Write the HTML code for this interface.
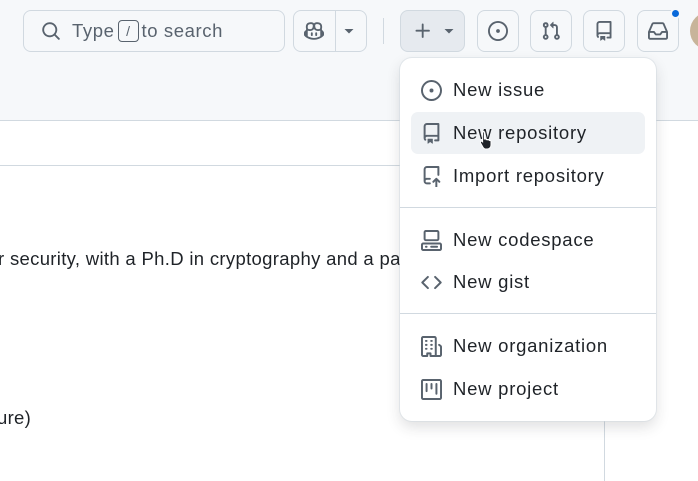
<!DOCTYPE html>
<html><head><style>
*{box-sizing:border-box;margin:0;padding:0}
body{width:698px;height:481px;overflow:hidden;background:#fff;font-family:"Liberation Sans",sans-serif;color:#1f2328;position:relative}
.hdr{position:absolute;left:0;top:0;width:698px;height:121px;background:#f6f8fa;border-bottom:1px solid #d1d9e0}
.btn{position:absolute;top:10px;height:42px;border:1px solid #d1d9e0;border-radius:8px;background:#f6f8fa;display:flex;align-items:center;justify-content:center}
.abs{position:absolute}
.menu{position:absolute;left:400px;top:58px;width:256px;height:363px;background:#fff;border-radius:12px;box-shadow:0 0 0 1px #d1d9e080,0 6px 14px rgba(37,41,46,.15)}
.it{position:absolute;left:11px;width:234px;height:42px;border-radius:7px;display:flex;align-items:center;font-size:18.5px;letter-spacing:.75px;color:#1f2328}
.it svg{position:absolute;left:10px}
.it span{position:absolute;left:42px}
.sep{position:absolute;left:0;width:256px;height:1px;background:#d1d9e0}
</style></head><body>
<div class="hdr"></div>
<div class="abs" style="left:0;top:165px;width:400px;height:1px;background:#d1d9e0"></div>
<div class="abs" style="left:604px;top:420px;width:1px;height:61px;background:#d1d9e0"></div>
<div class="abs" style="left:-2px;top:248px;font-size:18.5px;letter-spacing:.32px;white-space:nowrap">r security, with a Ph.D in cryptography and a pa</div>
<div class="abs" style="left:-3px;top:407px;font-size:18.5px;letter-spacing:.3px">ure)</div>

<div class="btn" style="left:23px;width:262px;justify-content:flex-start;color:#59636e;font-size:18.5px;letter-spacing:.6px">
<svg style="margin-left:17px" width="20" height="20" viewBox="0 0 16 16" fill="#59636e"><path d="M10.68 11.74a6 6 0 1 1 1.06-1.06l3.04 3.04a.75.75 0 1 1-1.06 1.06ZM11.5 7a4.5 4.5 0 1 0-9 0 4.5 4.5 0 0 0 9 0Z"/></svg>
<span style="margin-left:11px">Type</span><span style="display:inline-block;margin:0 3px;width:21px;height:22px;border:1px solid #59636e;border-radius:4px;font-size:14px;text-align:center;line-height:20px;letter-spacing:0">/</span><span>to search</span></div>

<div class="btn" style="left:293px;width:74px;justify-content:flex-start">
<svg style="margin-left:10px" width="20" height="20" viewBox="0 0 16 16" fill="#59636e"><path d="M7.998 15.035c-4.562 0-7.873-2.914-7.998-3.749V9.338c.085-.628.677-1.686 1.588-2.065.013-.07.024-.143.036-.218.029-.183.06-.384.126-.612-.201-.508-.254-1.084-.254-1.656 0-.87.128-1.769.693-2.484.579-.733 1.494-1.124 2.724-1.261 1.206-.134 2.262.034 2.944.765.05.053.096.108.139.165.044-.057.094-.112.143-.165.682-.731 1.738-.899 2.944-.765 1.23.137 2.145.528 2.724 1.261.566.715.693 1.614.693 2.484 0 .572-.053 1.148-.254 1.656.066.228.098.429.126.612.012.076.024.148.037.218.924.385 1.522 1.471 1.591 2.095v1.872c0 .766-3.351 3.795-8.002 3.795Zm0-1.485c2.28 0 4.584-1.11 5.002-1.433V7.862l-.023-.116c-.49.21-1.075.291-1.727.291-1.146 0-2.059-.327-2.710-.991A3.222 3.222 0 0 1 8 6.303a3.240 3.240 0 0 1-.544.743c-.65.664-1.563.991-2.710.991-.652 0-1.236-.081-1.727-.291l-.023.116v4.255c.419.323 2.722 1.433 5.002 1.433ZM6.762 2.830c-.193-.206-.637-.413-1.682-.297-1.019.113-1.479.404-1.713.7-.247.312-.369.789-.369 1.554 0 .793.129 1.171.308 1.371.162.181.519.379 1.442.379.853 0 1.339-.235 1.638-.54.315-.322.527-.827.617-1.553.117-.935-.037-1.395-.241-1.614Zm4.155-.297c-1.044-.116-1.488.091-1.681.297-.204.219-.359.679-.242 1.614.091.726.303 1.231.618 1.553.299.305.784.54 1.638.54.922 0 1.28-.198 1.442-.379.179-.2.308-.578.308-1.371 0-.765-.123-1.242-.37-1.554-.233-.296-.693-.587-1.713-.7Z"/><path d="M6.25 9.037a.75.75 0 0 1 .75.75v1.501a.75.75 0 0 1-1.5 0V9.787a.75.75 0 0 1 .75-.75Zm4.25.75v1.501a.75.75 0 0 1-1.5 0V9.787a.75.75 0 0 1 1.5 0Z"/></svg>
<div class="abs" style="left:41px;top:0;width:1px;height:40px;background:#d1d9e0"></div>
<svg class="abs" style="left:49px;top:15px" width="12" height="10" viewBox="0 0 12 10"><path d="M1.5 3h9L6 7.5z" fill="#59636e"/></svg>
</div>
<div class="abs" style="left:383px;top:18px;width:1px;height:26px;background:#d1d9e0"></div>

<div class="btn" style="left:400px;width:65px;background:#e6eaef">
<svg class="abs" style="left:12px;top:10px" width="20" height="20" viewBox="0 0 16 16" fill="#59636e"><path d="M7.75 2a.75.75 0 0 1 .75.75V7h4.25a.75.75 0 0 1 0 1.5H8.5v4.25a.75.75 0 0 1-1.5 0V8.5H2.750a.75.75 0 0 1 0-1.5H7V2.750A.75.75 0 0 1 7.75 2Z"/></svg>
<svg class="abs" style="left:42px;top:15px" width="12" height="10" viewBox="0 0 12 10"><path d="M1.5 3h9L6 7.5z" fill="#59636e"/></svg>
</div>
<div class="btn" style="left:477px;width:42px"><svg width="20" height="20" viewBox="0 0 16 16" fill="#59636e"><path d="M8 9.5a1.5 1.5 0 1 0 0-3 1.5 1.5 0 0 0 0 3Z"/><path d="M8 0a8 8 0 1 1 0 16A8 8 0 0 1 8 0ZM1.5 8a6.5 6.5 0 1 0 13 0 6.5 6.5 0 0 0-13 0Z"/></svg></div>
<div class="btn" style="left:530px;width:42px"><svg width="20" height="20" viewBox="0 0 16 16" fill="#59636e"><path d="M1.5 3.25a2.25 2.25 0 1 1 3 2.122v5.256a2.251 2.251 0 1 1-1.5 0V5.372A2.25 2.25 0 0 1 1.5 3.25Zm5.677-.177L9.573.677A.25.25 0 0 1 10 .854V2.5h1A2.5 2.5 0 0 1 13.5 5v5.628a2.251 2.251 0 1 1-1.5 0V5a1 1 0 0 0-1-1h-1v1.646a.25.25 0 0 1-.427.177L7.177 3.427a.25.25 0 0 1 0-.354ZM3.75 2.5a.75.75 0 1 0 0 1.5.75.75 0 0 0 0-1.5Zm0 9.5a.75.75 0 1 0 0 1.5.75.75 0 0 0 0-1.5Zm8.25.75a.75.75 0 1 0 1.5 0 .75.75 0 0 0-1.5 0Z"/></svg></div>
<div class="btn" style="left:583px;width:42px"><svg width="20" height="20" viewBox="0 0 16 16" fill="#59636e"><path d="M2 2.5A2.5 2.5 0 0 1 4.5 0h8.75a.75.75 0 0 1 .75.75v12.5a.75.75 0 0 1-.75.75h-2.5a.75.75 0 0 1 0-1.5h1.75v-2h-8a1 1 0 0 0-.714 1.7.75.75 0 1 1-1.072 1.05A2.495 2.495 0 0 1 2 11.5Zm10.5-1h-8a1 1 0 0 0-1 1v6.708A2.486 2.486 0 0 1 4.5 9h8ZM5 12.25a.25.25 0 0 1 .25-.25h3.5a.25.25 0 0 1 .25.25v3.25a.25.25 0 0 1-.4.2l-1.45-1.087a.249.249 0 0 0-.3 0L5.4 15.7a.25.25 0 0 1-.4-.2Z"/></svg></div>
<div class="btn" style="left:637px;width:42px"><svg width="20" height="20" viewBox="0 0 16 16" fill="#59636e"><path d="M2.8 2.06A1.75 1.75 0 0 1 4.41 1h7.18c.7 0 1.333.417 1.61 1.06l2.74 6.395c.04.093.06.194.06.295v4.5A1.75 1.75 0 0 1 14.25 15H1.75A1.75 1.75 0 0 1 0 13.25v-4.5c0-.101.02-.202.06-.295Zm1.61.44a.25.25 0 0 0-.23.152L1.887 8H4.75a.75.75 0 0 1 .6.3L6.625 10h2.75l1.275-1.7a.75.75 0 0 1 .6-.3h2.863L11.820 2.652a.25.25 0 0 0-.23-.152Zm10.09 7h-2.875l-1.275 1.7a.75.75 0 0 1-.6.3h-3.5a.75.75 0 0 1-.6-.3L4.375 9.5H1.5v3.75c0 .138.112.25.25.25h12.5a.25.25 0 0 0 .25-.25Z"/></svg></div>
<div class="abs" style="left:670px;top:8px;width:11px;height:11px;border-radius:50%;background:#0969da;border:2px solid #f6f8fa"></div>
<div class="abs" style="left:690px;top:12px;width:38px;height:38px;border-radius:50%;background:#c8b49a"></div>

<div class="menu">
<div class="it" style="top:11px"><svg width="21" height="21" viewBox="0 0 16 16" fill="#59636e"><path d="M8 9.5a1.5 1.5 0 1 0 0-3 1.5 1.5 0 0 0 0 3Z"/><path d="M8 0a8 8 0 1 1 0 16A8 8 0 0 1 8 0ZM1.5 8a6.5 6.5 0 1 0 13 0 6.5 6.5 0 0 0-13 0Z"/></svg><span>New issue</span></div>
<div class="it" style="top:54px;background:#eff2f5"><svg width="21" height="21" viewBox="0 0 16 16" fill="#59636e"><path d="M2 2.5A2.5 2.5 0 0 1 4.5 0h8.75a.75.75 0 0 1 .75.75v12.5a.75.75 0 0 1-.75.75h-2.5a.75.75 0 0 1 0-1.5h1.75v-2h-8a1 1 0 0 0-.714 1.7.75.75 0 1 1-1.072 1.05A2.495 2.495 0 0 1 2 11.5Zm10.5-1h-8a1 1 0 0 0-1 1v6.708A2.486 2.486 0 0 1 4.5 9h8ZM5 12.25a.25.25 0 0 1 .25-.25h3.5a.25.25 0 0 1 .25.25v3.25a.25.25 0 0 1-.4.2l-1.45-1.087a.249.249 0 0 0-.3 0L5.4 15.7a.25.25 0 0 1-.4-.2Z"/></svg><span>New repository</span></div>
<div class="it" style="top:97px"><svg width="21" height="21" viewBox="0 0 16 16" fill="#59636e"><path d="M2 2.5A2.5 2.5 0 0 1 4.5 0h8.75a.75.75 0 0 1 .75.75v6a.75.75 0 0 1-1.5 0V1.5h-8a1 1 0 0 0-1 1v6.708A2.493 2.493 0 0 1 4.5 9h2.25a.75.75 0 0 1 0 1.5H4.5a1 1 0 0 0 0 2h2.25a.75.75 0 0 1 0 1.5H4.5A2.5 2.5 0 0 1 2 11.5Zm10.22 6.72 2.25 2.25a.75.75 0 1 1-1.06 1.06l-.97-.97v4.69a.75.75 0 0 1-1.5 0v-4.69l-.97.97a.75.75 0 1 1-1.06-1.06l2.25-2.25a.75.75 0 0 1 1.06 0Z"/></svg><span>Import repository</span></div>
<div class="sep" style="top:149px"></div>
<div class="it" style="top:161px"><svg width="21" height="21" viewBox="0 0 16 16" fill="#59636e"><path d="M0 11.25c0-.966.784-1.75 1.75-1.75h12.5c.966 0 1.75.784 1.75 1.75v3A1.75 1.75 0 0 1 14.25 16H1.75A1.75 1.75 0 0 1 0 14.25Zm2-9.5C2 .784 2.784 0 3.75 0h8.5C13.216 0 14 .784 14 1.75v5a1.75 1.75 0 0 1-1.75 1.75h-8.5A1.75 1.75 0 0 1 2 6.75Zm1.75-.25a.25.25 0 0 0-.25.25v5c0 .138.112.25.25.25h8.5a.25.25 0 0 0 .25-.25v-5a.25.25 0 0 0-.25-.25Zm-2 9.5a.25.25 0 0 0-.25.25v3c0 .138.112.25.25.25h12.5a.25.25 0 0 0 .25-.25v-3a.25.25 0 0 0-.25-.25Z"/><path d="M7 12.75a.75.75 0 0 1 .75-.75h4.5a.75.75 0 0 1 0 1.5h-4.5a.75.75 0 0 1-.75-.75Zm-4 0a.75.75 0 0 1 .75-.75h.5a.75.75 0 0 1 0 1.5h-.5a.75.75 0 0 1-.75-.75Z"/></svg><span>New codespace</span></div>
<div class="it" style="top:203px"><svg width="21" height="21" viewBox="0 0 16 16" fill="#59636e"><path d="m11.28 3.22 4.25 4.25a.75.75 0 0 1 0 1.06l-4.25 4.25a.749.749 0 0 1-1.275-.326.749.749 0 0 1 .215-.734L13.94 8l-3.72-3.72a.749.749 0 0 1 .326-1.275.749.749 0 0 1 .734.215Zm-6.56 0a.751.751 0 0 1 1.042.018.751.751 0 0 1 .018 1.042L2.06 8l3.72 3.72a.749.749 0 0 1-.326 1.275.749.749 0 0 1-.734-.215L.47 8.53a.75.75 0 0 1 0-1.06Z"/></svg><span>New gist</span></div>
<div class="sep" style="top:255px"></div>
<div class="it" style="top:267px"><svg width="21" height="21" viewBox="0 0 16 16" fill="#59636e"><path d="M1.75 16A1.75 1.75 0 0 1 0 14.25V1.75C0 .784.784 0 1.75 0h8.5C11.216 0 12 .784 12 1.75v12.5c0 .085-.006.168-.018.25h2.268a.25.25 0 0 0 .25-.25V8.285a.25.25 0 0 0-.111-.208l-1.055-.703a.749.749 0 1 1 .832-1.248l1.055.703c.487.325.779.871.779 1.456v5.965A1.75 1.75 0 0 1 14.25 16h-3.5a.766.766 0 0 1-.197-.026c-.099.017-.2.026-.303.026h-3a.75.75 0 0 1-.75-.75V14h-1v1.25a.75.75 0 0 1-.75.75Zm-.25-1.75c0 .138.112.25.25.25H4v-1.25a.75.75 0 0 1 .75-.75h2.5a.75.75 0 0 1 .75.75v1.25h2.25a.25.25 0 0 0 .25-.25V1.75a.25.25 0 0 0-.25-.25h-8.5a.25.25 0 0 0-.25.25ZM3.75 6h.5a.75.75 0 0 1 0 1.5h-.5a.75.75 0 0 1 0-1.5ZM3 3.75A.75.75 0 0 1 3.75 3h.5a.75.75 0 0 1 0 1.5h-.5A.75.75 0 0 1 3 3.75Zm4 3A.75.75 0 0 1 7.75 6h.5a.75.75 0 0 1 0 1.5h-.5A.75.75 0 0 1 7 6.75ZM7.75 3h.5a.75.75 0 0 1 0 1.5h-.5a.75.75 0 0 1 0-1.5ZM3 9.75A.75.75 0 0 1 3.75 9h.5a.75.75 0 0 1 0 1.5h-.5A.75.75 0 0 1 3 9.75ZM7.75 9h.5a.75.75 0 0 1 0 1.5h-.5a.75.75 0 0 1 0-1.5Z"/></svg><span>New organization</span></div>
<div class="it" style="top:310px"><svg width="21" height="21" viewBox="0 0 16 16" fill="#59636e"><path d="M1.75 0h12.5C15.216 0 16 .784 16 1.75v12.5A1.75 1.75 0 0 1 14.25 16H1.75A1.75 1.75 0 0 1 0 14.25V1.75C0 .784.784 0 1.75 0ZM1.5 1.75v12.5c0 .138.112.25.25.25h12.5a.25.25 0 0 0 .25-.25V1.75a.25.25 0 0 0-.25-.25H1.75a.25.25 0 0 0-.25.25ZM11.75 3a.75.75 0 0 1 .75.75v7.5a.75.75 0 0 1-1.5 0v-7.5a.75.75 0 0 1 .75-.75Zm-8.25.75a.75.75 0 0 1 1.5 0v5.5a.75.75 0 0 1-1.5 0ZM8 3a.75.75 0 0 1 .75.75v3.5a.75.75 0 0 1-1.5 0v-3.5A.75.75 0 0 1 8 3Z"/></svg><span>New project</span></div>
</div>
<svg class="abs" style="left:479px;top:130px" width="16" height="20" viewBox="0 0 16 20"><path d="M4 1.5c.8 0 1.4.6 1.4 1.4V9l.6-.1c.6-.1 1.2.3 1.3.8.5-.3 1.2-.2 1.6.3.5-.3 1.3-.1 1.6.5.6-.2 1.4.2 1.5 1v3.5c0 2.2-1.6 4-3.8 4H7c-1.3 0-2.4-.7-3-1.8L1.6 13c-.4-.7 0-1.5.7-1.7.5-.2 1 0 1.3.4V2.9c0-.8.6-1.4 1.4-1.4z" fill="#1f2328" stroke="#fff" stroke-width="1"/></svg>
</body></html>
